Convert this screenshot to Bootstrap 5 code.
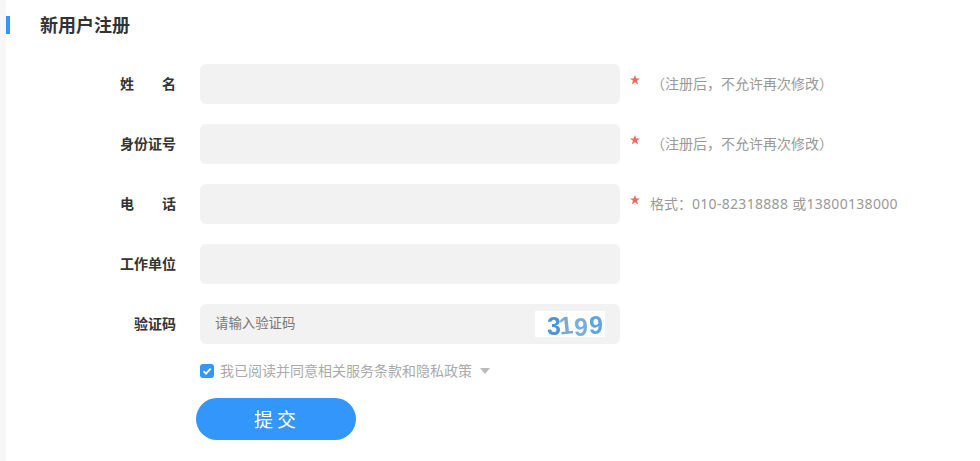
<!DOCTYPE html>
<html lang="zh">
<head>
<meta charset="utf-8">
<title>新用户注册</title>
<link href="https://cdn.jsdelivr.net/npm/bootstrap@5.3.0/dist/css/bootstrap.min.css" rel="stylesheet">
<style>
html,body{height:100%;overflow:hidden;}
body{background:#f7f7f7;font-family:"Noto Sans","Noto Sans CJK SC",sans-serif;padding-left:6px;}
.page-panel{background:#fff;height:461px;padding-top:16px;}
.title-bar{height:18px;border-left:4px solid #3296fa;padding-left:30px;font-size:18px;font-weight:700;color:#333;line-height:18px;}
.form-area{margin-top:30px;padding-left:114px;}
.form-line{height:40px;margin-bottom:20px;}
.form-label-x{width:56px;font-size:14px;line-height:18px;font-weight:700;color:#333;margin-right:24px;padding-bottom:1px;}
.label-right{text-align:right;}
.input-x{width:420px;height:40px;background:#f2f2f2;border:0;border-radius:6px;padding:0 15px 2px;font-size:13.4px;color:#777;outline:0;}
.input-x::placeholder{color:#777;opacity:1;}
.captcha-box{width:420px;}
.captcha-box .input-x{width:100%;}
.captcha-img{position:absolute;right:15px;top:7px;width:70px;height:26px;background:#fff;overflow:visible;}
.captcha-digits{filter:blur(.5px);}
.star-x{margin-left:10px;margin-bottom:8px;flex:none;}
.hint{color:#999;font-size:14px;line-height:18px;padding-bottom:1px;}
.hint-a{margin-left:11px;}
.hint-b{margin-left:10px;}
.hint-num{letter-spacing:.3px;}
.agree-row{margin-left:80px;margin-top:-2px;height:18px;font-size:14px;line-height:18px;color:#aaa;}
.check-x{width:14px;height:14px;background:#3296fa;border-radius:3px;margin-right:6px;}
.caret-x{width:0;height:0;border-left:5px solid transparent;border-right:5px solid transparent;border-top:6px solid #bbb;margin-left:8px;}
.submit-x{margin-left:76px;margin-top:18px;width:160px;height:42px;border-radius:21px;background:#3296fa;border:0;color:#fff;font-size:19px;line-height:38px;letter-spacing:4px;padding:1px 0 0 2px;}
.submit-x:hover{background:#3296fa;color:#fff;}
</style>
</head>
<body>
<div class="page-panel">
  <div class="title-bar">新用户注册</div>
  <form class="form-area">
    <div class="form-line d-flex align-items-center">
      <div class="form-label-x d-flex justify-content-between"><span>姓</span><span>名</span></div>
      <input class="input-x" type="text" aria-label="姓名">
      <svg class="star-x" width="10" height="10" viewBox="0 0 10 10"><path d="M5 0 6.3 3.5H10L7 5.7 8.2 9.5 5 7.2 1.8 9.5 3 5.7 0 3.5H3.7Z" fill="#ee6a5f"/></svg>
      <span class="hint hint-a">（注册后，不允许再次修改）</span>
    </div>
    <div class="form-line d-flex align-items-center">
      <div class="form-label-x">身份证号</div>
      <input class="input-x" type="text" aria-label="身份证号">
      <svg class="star-x" width="10" height="10" viewBox="0 0 10 10"><path d="M5 0 6.3 3.5H10L7 5.7 8.2 9.5 5 7.2 1.8 9.5 3 5.7 0 3.5H3.7Z" fill="#ee6a5f"/></svg>
      <span class="hint hint-a">（注册后，不允许再次修改）</span>
    </div>
    <div class="form-line d-flex align-items-center">
      <div class="form-label-x d-flex justify-content-between"><span>电</span><span>话</span></div>
      <input class="input-x" type="text" aria-label="电话">
      <svg class="star-x" width="10" height="10" viewBox="0 0 10 10"><path d="M5 0 6.3 3.5H10L7 5.7 8.2 9.5 5 7.2 1.8 9.5 3 5.7 0 3.5H3.7Z" fill="#ee6a5f"/></svg>
      <span class="hint hint-b">格式：<span class="hint-num">010-82318888 或13800138000</span></span>
    </div>
    <div class="form-line d-flex align-items-center">
      <div class="form-label-x">工作单位</div>
      <input class="input-x" type="text" aria-label="工作单位">
    </div>
    <div class="form-line d-flex align-items-center">
      <div class="form-label-x label-right">验证码</div>
      <div class="captcha-box position-relative">
        <input class="input-x" type="text" placeholder="请输入验证码" aria-label="验证码">
        <svg class="captcha-img" viewBox="0 0 70 26" role="img" aria-label="验证码图片">
          <g class="captcha-digits" font-family="Liberation Sans, sans-serif" font-weight="700" font-size="25">
            <text x="12" y="24" fill="#4a96dc">3</text>
            <text x="24" y="23" fill="#7fa9cf" transform="rotate(-6 32 15)">1</text>
            <text x="39" y="25" fill="#79aedd">9</text>
            <text x="54" y="23" fill="#5ea5e3">9</text>
          </g>
        </svg>
      </div>
    </div>
    <div class="agree-row d-flex align-items-center">
      <span class="check-x d-inline-flex align-items-center justify-content-center">
        <svg width="10" height="10" viewBox="0 0 10 10"><path d="M1.5 5.2 4 7.6 8.6 2.6" fill="none" stroke="#fff" stroke-width="1.8"/></svg>
      </span>
      <span>我已阅读并同意相关服务条款和隐私政策</span>
      <span class="caret-x"></span>
    </div>
    <button type="button" class="btn submit-x d-block">提交</button>
  </form>
</div>
<script src="https://cdn.jsdelivr.net/npm/bootstrap@5.3.0/dist/js/bootstrap.bundle.min.js"></script>
</body>
</html>
